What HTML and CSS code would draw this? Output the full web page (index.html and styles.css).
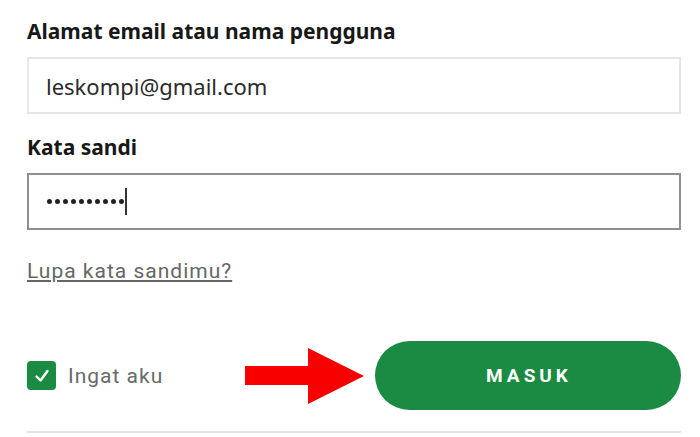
FILE: index.html
```html
<!DOCTYPE html>
<html lang="id">
<head>
    <meta charset="UTF-8">
    <meta name="viewport" content="width=device-width, initial-scale=1.0">
    <title>Masuk</title>
    <link rel="stylesheet" href="styles.css">
</head>
<body>
    <form class="login">
        <label class="field-label" for="username">Alamat email atau nama pengguna</label>
        <div class="input input-light" id="username">leskompi@gmail.com</div>

        <label class="field-label label-pass" for="password">Kata sandi</label>
        <div class="input input-dark" id="password">
            <span class="dots">
                <i></i><i></i><i></i><i></i><i></i><i></i><i></i><i></i><i></i><i></i>
            </span>
            <span class="caret"></span>
        </div>

        <a class="forgot" href="#">Lupa kata sandimu?</a>

        <div class="actions">
            <label class="remember">
                <span class="checkbox">
                    <svg width="18" height="18" viewBox="0 0 18 18"><path d="M3.5 9.5 L7.5 13.5 L14.5 4" fill="none" stroke="#fff" stroke-width="2.4" stroke-linecap="round" stroke-linejoin="round"/></svg>
                </span>
                Ingat aku
            </label>
            <svg class="arrow" width="119" height="56" viewBox="0 0 119 56">
                <polygon points="0,18 63,18 63,0 119,28 63,56 63,37 0,37" fill="#f90000"/>
            </svg>
            <button type="button" class="submit">MASUK</button>
        </div>
        <hr class="divider">
    </form>
</body>
</html>
```

FILE: styles.css
```css
body {
    margin: 0;
    background: #fff;
    font-family: 'Noto Sans', 'Open Sans', sans-serif;
}
.login {
    width: 654px;
    padding: 18px 0 0 27px;
}
.field-label {
    display: block;
    font-weight: bold;
    font-size: 21px;
    line-height: 26px;
    color: #181818;
}
.label-pass {
    margin-top: 20px;
}
.input {
    box-sizing: border-box;
    height: 57px;
    margin-top: 13px;
    padding: 0 17px;
    display: flex;
    align-items: center;
    font-size: 22px;
    color: #2b2b2b;
}
.input-light {
    border: 2px solid #e6e6e6;
}
.input-dark {
    border: 2px solid #8f8f8f;
}
.dots {
    display: flex;
    gap: 3px;
    margin-left: 1px;
}
.dots i {
    width: 5px;
    height: 5px;
    border-radius: 50%;
    background: #222;
}
.caret {
    display: inline-block;
    width: 2px;
    height: 27px;
    margin-left: 1px;
    background: #333;
}
.forgot {
    display: inline-block;
    margin-top: 29px;
    font-family: Roboto, sans-serif;
    font-size: 21px;
    letter-spacing: 1px;
    color: #666;
    text-decoration: underline;
}
.actions {
    display: flex;
    align-items: center;
    margin-top: 58px;
}
.remember {
    display: flex;
    align-items: center;
    gap: 12px;
    font-family: Roboto, sans-serif;
    font-size: 21px;
    letter-spacing: 1px;
    color: #6a6a6a;
}
.checkbox {
    width: 29px;
    height: 29px;
    border-radius: 4px;
    background: #1b8a42;
    display: flex;
    align-items: center;
    justify-content: center;
}
.arrow {
    margin-left: auto;
    margin-right: 11px;
}
.submit {
    width: 306px;
    height: 69px;
    border: none;
    border-radius: 35px;
    background: #1b8a42;
    color: #fff;
    font-family: Roboto, sans-serif;
    font-weight: bold;
    font-size: 19px;
    letter-spacing: 4px;
    padding-left: 8px;
}
.divider {
    margin: 21px 0 0;
    border: none;
    border-top: 2px solid #e3e3e3;
}
```
